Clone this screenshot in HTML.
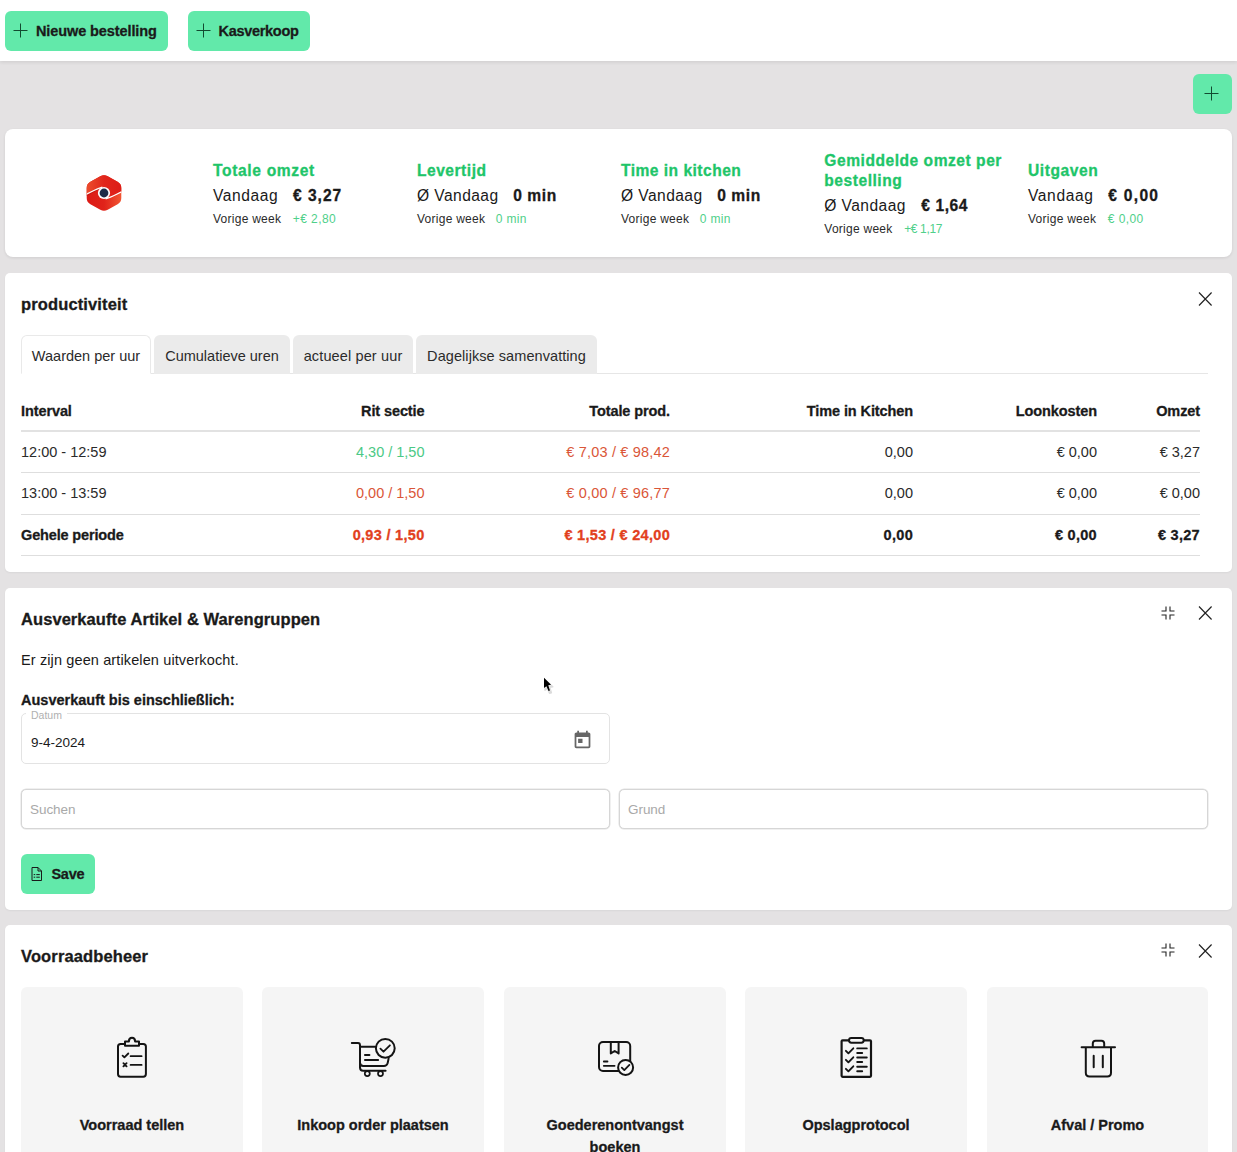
<!DOCTYPE html>
<html lang="nl">
<head>
<meta charset="utf-8">
<title>Dashboard</title>
<style>
*{box-sizing:border-box;margin:0;padding:0}
html,body{width:1237px;height:1152px;overflow:hidden}
body{background:#e4e2e3;font-family:"Liberation Sans",sans-serif;color:#1a1a1a;font-size:14px;position:relative}
.topbar{position:absolute;left:0;top:0;width:1237px;height:61px;background:#fff;box-shadow:0 2px 3px rgba(0,0,0,.07)}
.btn{position:absolute;height:39.5px;letter-spacing:-.1px;border-radius:6px;background:#62e9aa;display:flex;align-items:center;font-weight:bold;font-size:14.5px;color:#1a1a1a;white-space:nowrap}
.btn svg{display:block;flex:none}
.card{position:absolute;left:5px;width:1227px;background:#fff;border-radius:5px;box-shadow:0 1px 2px rgba(0,0,0,.05)}
.card h2{position:absolute;left:16px;font-size:16.5px;font-weight:bold;line-height:20px;white-space:nowrap;letter-spacing:.13px}
.ico{position:absolute;display:block}
.bd,.btn,.card h2,.stat .t,.stat .v b,th,tr.tot td,.tile .lbl{-webkit-text-stroke:.3px currentColor}
/* stats */
.stats{top:128.5px;height:128.7px;border-radius:8px;box-shadow:0 1px 3px rgba(0,0,0,.09)}
.logo{position:absolute;left:81px;top:45px;width:36px;height:38px}
.stat{position:absolute;top:-.5px;height:129px;width:200px;padding-top:3.8px;display:flex;flex-direction:column;justify-content:center}
.stat .t{font-size:15.6px;font-weight:bold;color:#1ec569;line-height:20px;letter-spacing:.65px}
.stat .v{font-size:15.6px;line-height:24px;margin-top:2.4px;white-space:nowrap;letter-spacing:.42px}
.stat .v b{margin-left:14.6px;letter-spacing:.6px}
.stat .w{font-size:12px;line-height:16px;margin-top:3.8px;white-space:nowrap;color:#2a2a2a;letter-spacing:.26px}
.stat .w span{margin-left:11.6px;color:#4fd08a;letter-spacing:.42px}
/* productivity */
.prod{top:273px;height:299px}
.tabs{position:absolute;left:16px;top:62px;width:1187px;height:39px;border-bottom:1px solid #e6e6e6}
.tab{position:absolute;top:0;height:39px;background:#ebebeb;border-radius:6px 6px 0 0;font-size:14.5px;line-height:43.6px;text-align:center;color:#2b2b2b;white-space:nowrap}
.tab.on{background:#fff;border:1px solid #e9e9e9;border-bottom:1px solid #fff;height:39px;line-height:41.6px}
table{position:absolute;left:16px;top:116px;width:1179px;border-collapse:collapse;table-layout:fixed}
th,td{font-size:14.5px;text-align:right;padding:0;white-space:nowrap;vertical-align:middle}
th:first-child,td:first-child{text-align:left}
th{height:42px;padding-top:2px;font-weight:bold;border-bottom:2px solid #e2e2e2;letter-spacing:-.1px}
td{border-bottom:1px solid #dedede;color:#2a2a2a}
tr.r1 td{height:41px}
tr.r2 td{height:42px}
tr.tot td{height:41px;font-weight:bold;color:#1a1a1a;letter-spacing:.3px}
tr.tot td:first-child{letter-spacing:-.15px}
.g{color:#4bc985!important}
.r{color:#da5638!important;letter-spacing:.18px}
tr.tot .r{color:#e2401d!important;letter-spacing:.3px}
/* sold out */
.sold{top:588px;height:321.8px}
.p{position:absolute;left:16px;font-size:14.5px;line-height:18px;white-space:nowrap}
.field{position:absolute;border:1px solid #dcdcdc;border-radius:5px;background:#fff}
.inp{border-color:#d6d6d6;box-shadow:0 0 0 .5px #e2e2e2}
.ph{position:absolute;left:8px;top:0;line-height:40px;font-size:13.5px;color:#a9a9a9;letter-spacing:-.05px}
/* inventory */
.inv{top:925px;height:260px}
.tile{position:absolute;top:62px;width:222px;height:200px;background:#f5f5f5;border-radius:6px}
.tile .lbl{position:absolute;left:0;width:100%;top:128px;text-align:center;font-weight:bold;font-size:14.5px;line-height:21.5px}
.tile svg{position:absolute;left:81px;top:40px}
</style>
</head>
<body>
<div class="topbar">
  <div class="btn" style="left:5px;top:11px;width:163px"><svg style="margin-left:8px" width="16" height="16" viewBox="0 0 16 16"><path d="M7.5 .5v14M.5 7.5h14" stroke="#124a30" stroke-width="1" fill="none"/></svg><span style="margin-left:7px">Nieuwe bestelling</span></div>
  <div class="btn" style="left:188px;top:11px;width:122px"><svg style="margin-left:8px" width="16" height="16" viewBox="0 0 16 16"><path d="M7.5 .5v14M.5 7.5h14" stroke="#124a30" stroke-width="1" fill="none"/></svg><span style="margin-left:6.5px;letter-spacing:-.3px">Kasverkoop</span></div>
</div>
<div class="btn" style="left:1192.5px;top:74.4px;width:39.7px;height:39.6px"><svg style="position:absolute;left:11.5px;top:11.6px" width="16" height="16" viewBox="0 0 16 16"><path d="M7.5 .5v14M.5 7.5h14" stroke="#124a30" stroke-width="1" fill="none"/></svg></div>

<section class="card stats">
  <svg class="logo" viewBox="0 0 36 38"><defs><linearGradient id="lg1" x1="0" y1="0" x2="1" y2="0"><stop offset="0" stop-color="#ec4e2e"/><stop offset=".5" stop-color="#e1261b"/><stop offset="1" stop-color="#dd1c17"/></linearGradient><linearGradient id="lg2" x1="0" y1="0" x2="1" y2="0"><stop offset="0" stop-color="#dc1a15"/><stop offset=".5" stop-color="#e0231a"/><stop offset="1" stop-color="#f25834"/></linearGradient><clipPath id="hx"><path d="M14.31 2.31Q18.00 0.30 21.69 2.31L31.61 7.69Q35.30 9.70 35.30 13.90L35.30 24.10Q35.30 28.30 31.61 30.31L21.69 35.69Q18.00 37.70 14.31 35.69L4.39 30.31Q0.70 28.30 0.70 24.10L0.70 13.90Q0.70 9.70 4.39 7.69Z"/></clipPath></defs><g clip-path="url(#hx)"><rect width="36" height="38" fill="url(#lg2)"/><path d="M0 0H36V17.6C30 20.4 25 23.4 19.6 24.8L16.4 13.2C11 14.6 6 17.6 0 20.4Z" fill="url(#lg1)"/><path d="M0 21.4C6 18.4 11 15.2 16.4 13.8" stroke="#b31410" stroke-width="1.6" fill="none" opacity=".55"/><path d="M0 20.4C6 17.6 11 14.6 16.4 13.2" stroke="#fff" stroke-width="1.3" fill="none"/><path d="M36 17.6C30 20.4 25 23.4 19.6 24.8" stroke="#fff" stroke-width="1.3" fill="none"/></g><circle cx="18" cy="19" r="6.1" fill="#fff"/><circle cx="18" cy="19" r="4.4" fill="#1f2c47"/></svg>
  <div class="stat" style="left:208px"><div class="t">Totale omzet</div><div class="v" style="letter-spacing:.57px">Vandaag<b style="margin-left:14.8px;letter-spacing:.95px">€ 3,27</b></div><div class="w">Vorige week<span>+€ 2,80</span></div></div>
  <div class="stat" style="left:412px"><div class="t" style="letter-spacing:.5px">Levertijd</div><div class="v">Ø Vandaag<b>0 min</b></div><div class="w">Vorige week<span style="margin-left:10.6px;letter-spacing:.3px">0 min</span></div></div>
  <div class="stat" style="left:616px"><div class="t" style="letter-spacing:.47px">Time in kitchen</div><div class="v">Ø Vandaag<b>0 min</b></div><div class="w">Vorige week<span style="margin-left:10.6px;letter-spacing:.3px">0 min</span></div></div>
  <div class="stat" style="left:819.3px"><div class="t" style="letter-spacing:.52px">Gemiddelde omzet per bestelling</div><div class="v">Ø Vandaag<b style="margin-left:15.5px;letter-spacing:.55px">€ 1,64</b></div><div class="w">Vorige week<span style="letter-spacing:-.35px">+€ 1,17</span></div></div>
  <div class="stat" style="left:1023px"><div class="t" style="letter-spacing:.56px">Uitgaven</div><div class="v" style="letter-spacing:.6px">Vandaag<b style="margin-left:14.8px;letter-spacing:1.28px">€ 0,00</b></div><div class="w">Vorige week<span>€ 0,00</span></div></div>
</section>

<section class="card prod">
  <h2 style="top:21px">productiviteit</h2>
  <svg class="ico" style="left:1193px;top:19px" width="14" height="14" viewBox="0 0 14 14"><path d="M1 0.5l12.6 13M13.6 0.5L1 13.5" stroke="#222" stroke-width="1.15" fill="none"/></svg>
  <div class="tabs">
    <div class="tab on" style="left:0;width:130px">Waarden per uur</div>
    <div class="tab" style="left:133px;width:136px">Cumulatieve uren</div>
    <div class="tab" style="left:272px;width:120px;letter-spacing:.13px">actueel per uur</div>
    <div class="tab" style="left:395px;width:181px;letter-spacing:.07px">Dagelijkse samenvatting</div>
  </div>
  <table>
    <colgroup><col style="width:219.5px"><col style="width:184px"><col style="width:245.5px"><col style="width:243px"><col style="width:184px"><col style="width:103px"></colgroup>
    <thead><tr><th>Interval</th><th>Rit sectie</th><th>Totale prod.</th><th>Time in Kitchen</th><th>Loonkosten</th><th>Omzet</th></tr></thead>
    <tbody>
      <tr class="r1"><td>12:00 - 12:59</td><td class="g">4,30 / 1,50</td><td class="r">€ 7,03 / € 98,42</td><td>0,00</td><td>€ 0,00</td><td>€ 3,27</td></tr>
      <tr class="r2"><td>13:00 - 13:59</td><td class="r" style="letter-spacing:0">0,00 / 1,50</td><td class="r">€ 0,00 / € 96,77</td><td>0,00</td><td>€ 0,00</td><td>€ 0,00</td></tr>
      <tr class="tot"><td>Gehele periode</td><td class="r">0,93 / 1,50</td><td class="r">€ 1,53 / € 24,00</td><td>0,00</td><td>€ 0,00</td><td>€ 3,27</td></tr>
    </tbody>
  </table>
</section>

<section class="card sold">
  <h2 style="top:21px;letter-spacing:.07px">Ausverkaufte Artikel &amp; Warengruppen</h2>
  <svg class="ico" style="left:1155.8px;top:18px" width="14" height="14" viewBox="0 0 14 14"><path d="M5 0.5v4.5h-4.5M9 0.5v4.5h4.5M5 13.5v-4.5h-4.5M9 13.5v-4.5h4.5" stroke="#222" stroke-width="1.1" fill="none"/></svg>
  <svg class="ico" style="left:1193px;top:18px" width="14" height="14" viewBox="0 0 14 14"><path d="M1 0.5l12.6 13M13.6 0.5L1 13.5" stroke="#222" stroke-width="1.15" fill="none"/></svg>
  <div class="p" style="top:63px;letter-spacing:.12px">Er zijn geen artikelen uitverkocht.</div>
  <div class="p bd" style="top:103px;font-weight:bold">Ausverkauft bis einschließlich:</div>
  <div class="field" style="left:16px;top:125px;width:588.5px;height:51px;border-color:#e3e3e3">
    <span style="position:absolute;left:4px;top:-5px;padding:0 5px;background:#fff;font-size:10.5px;line-height:12px;color:#b0b0b0">Datum</span>
    <span style="position:absolute;left:9px;top:20px;font-size:13.5px;line-height:18px;color:#1a1a1a">9-4-2024</span>
    <svg class="ico" style="left:549.5px;top:15px" width="21" height="21" viewBox="0 0 24 24"><path fill="#666" d="M19 4h-1V2h-2v2H8V2H6v2H5c-1.1 0-2 .9-2 2v14c0 1.1.9 2 2 2h14c1.1 0 2-.9 2-2V6c0-1.1-.9-2-2-2zm0 16H5V9h14v11zM7 11h5v5H7z"/></svg>
  </div>
  <div class="field inp" style="left:16px;top:201px;width:588.5px;height:40px"><span class="ph">Suchen</span></div>
  <div class="field inp" style="left:614px;top:201px;width:588.5px;height:40px"><span class="ph">Grund</span></div>
  <div class="btn" style="left:16px;top:266px;width:74px"><svg style="margin-left:9px" width="14" height="16" viewBox="0 0 14 16"><path d="M2 1.5h6l3.5 3.5v9.5h-9.5z M8 1.5v3.5h3.5 M3.7 8.6h1.5 M6.3 8.6h3.5 M3.7 11.2h1.5 M6.3 11.2h3.5" stroke="#1a1a1a" stroke-width="1" fill="none"/></svg><span style="margin-left:7.5px;letter-spacing:-.3px">Save</span></div>
</section>

<svg class="ico" style="left:540px;top:674px;overflow:visible" width="16" height="20" viewBox="0 0 16 20"><path d="M4.4 4.6V15.2l2.4-1.8 2.1 4.7 1.9-.5-1.8-5.4 3.2-.5Z" fill="#8a8a8a" stroke="#8a8a8a" stroke-width="1.4" stroke-linejoin="round" opacity=".3" transform="translate(.6 1.1)"/><path d="M4 3.7V14l2.4-1.8 2.1 4.7 1.5-.3-1.7-5.4 2.8-.4Z" fill="#000" stroke="#fff" stroke-width=".9" paint-order="stroke"/></svg>

<section class="card inv">
  <h2 style="top:21px">Voorraadbeheer</h2>
  <svg class="ico" style="left:1155.8px;top:18px" width="14" height="14" viewBox="0 0 14 14"><path d="M5 0.5v4.5h-4.5M9 0.5v4.5h4.5M5 13.5v-4.5h-4.5M9 13.5v-4.5h4.5" stroke="#222" stroke-width="1.1" fill="none"/></svg>
  <svg class="ico" style="left:1193px;top:18.5px" width="14" height="14" viewBox="0 0 14 14"><path d="M1 0.5l12.6 13M13.6 0.5L1 13.5" stroke="#222" stroke-width="1.15" fill="none"/></svg>
  <div class="tile" style="left:16px"><svg class="ti" width="60" height="60" viewBox="0 0 60 60" fill="none" stroke="#141414" stroke-width="2" stroke-linecap="round" stroke-linejoin="round"><rect x="16" y="17" width="27.9" height="32.7" rx="2.6"/><path d="M23 18.8V14.4H26.9C26.9 9.6 33.1 9.6 33.1 14.4H37V18.8Z" fill="#f8f8f8"/><path d="M20.6 28.6l1.8 1.8 3.9-3.9M28.6 29.2h11M21.4 36.2l3.2 3.2M24.6 36.2l-3.2 3.2M28.6 37.9h11" stroke-width="1.8"/></svg><div class="lbl">Voorraad tellen</div></div>
  <div class="tile" style="left:257px"><svg class="ti" width="60" height="60" viewBox="0 0 60 60" fill="none" stroke="#141414" stroke-width="2" stroke-linecap="round" stroke-linejoin="round"><path d="M8.8 16H15C16.4 16 17 17 17 18.4V40.5C17 42.6 18.2 43.7 20.2 43.7H42.6M17.2 19.8H33M17 35.6C17 38 18.2 39 20.2 39H41C43 39 44 38 44.6 36.2L45.6 31.6"/><circle cx="42.3" cy="21.3" r="9.4" fill="#f7f7f7"/><path d="M37.4 21.6l3.1 3.1 6.4-6.4M21.9 28h4.6M21.9 33h13.3" stroke-width="1.8"/><circle cx="24.3" cy="46.6" r="2.5" stroke-width="1.7"/><circle cx="37.5" cy="46.6" r="2.5" stroke-width="1.7"/></svg><div class="lbl">Inkoop order plaatsen</div></div>
  <div class="tile" style="left:499px"><svg class="ti" width="60" height="60" viewBox="0 0 60 60" fill="none" stroke="#141414" stroke-width="2" stroke-linecap="round" stroke-linejoin="round"><rect x="14" y="15.1" width="31.2" height="28.8" rx="4"/><path d="M25.8 15.2V26.4l3.9-2.4 3.9 2.4V15.2"/><path d="M18.8 34.5h3.7M18.8 38.8h10.8" stroke-width="1.8"/><circle cx="40.6" cy="40.4" r="7.5" fill="#f7f7f7"/><path d="M36.8 40.6l2.5 2.5 5.1-5.2" stroke-width="1.8"/></svg><div class="lbl" style="padding:0 30px">Goederenontvangst boeken</div></div>
  <div class="tile" style="left:740px"><svg class="ti" width="60" height="60" viewBox="0 0 60 60" fill="none" stroke="#141414" stroke-width="2" stroke-linecap="round" stroke-linejoin="round"><rect x="15.6" y="13.3" width="29.4" height="36.5" rx="1" stroke-width="2.2"/><rect x="23" y="11" width="14.7" height="4.7" rx="2.35" fill="#f8f8f8"/><path d="M19.9 23.8l2.5 2.5 4.9-5M31.2 21.4h9.6M31.2 26h5M19.9 32.8l2.5 2.5 4.9-5M31.2 30.5h9.6M31.2 35h5M19.9 41.8l2.5 2.5 4.9-5M31.2 39.7h9.6M31.2 44.2h5" stroke-width="1.9"/></svg><div class="lbl">Opslagprotocol</div></div>
  <div class="tile" style="left:982px;width:221px"><svg class="ti" width="60" height="60" viewBox="0 0 60 60" fill="none" stroke="#141414" stroke-width="2" stroke-linecap="round" stroke-linejoin="round"><path d="M13.6 20.2H47M24.8 20V16.6C24.8 14.8 25.8 13.8 27.6 13.8H33.4C35.2 13.8 36.2 14.8 36.2 16.6V20M17.8 20.4V45.8C17.8 48.2 19.2 49.5 21.5 49.5H39.3C41.6 49.5 43 48.2 43 45.8V20.4M25.7 28.8V40.3M34.8 28.8V40.3"/></svg><div class="lbl">Afval / Promo</div></div>
</section>
</body>
</html>
